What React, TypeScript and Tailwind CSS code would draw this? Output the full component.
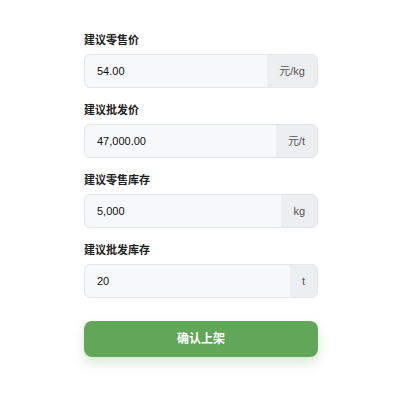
const fields = [
  { label: "建议零售价", value: "54.00", unit: "元/kg" },
  { label: "建议批发价", value: "47,000.00", unit: "元/t" },
  { label: "建议零售库存", value: "5,000", unit: "kg" },
  { label: "建议批发库存", value: "20", unit: "t" },
];

export default function App() {
  return (
    <div
      className="min-h-[400px] bg-white pt-[30px]"
      style={{ fontFamily: '"Liberation Sans", "Noto Sans CJK SC", sans-serif' }}
    >
      <div className="ml-[84px] flex w-[234px] flex-col gap-[12px]">
        {fields.map((f) => (
          <div key={f.label} className="flex flex-col gap-1">
            <label className="text-[11px] leading-5 font-semibold text-[#222]">{f.label}</label>
            <div className="flex h-[34px] overflow-hidden rounded-md border border-[#e3e5e9] bg-[#f7f8fa]">
              <input
                readOnly
                value={f.value}
                className="min-w-0 flex-1 bg-transparent px-3 text-[11px] text-[#111] outline-none"
              />
              <span className="flex items-center bg-[#eceef1] px-3 text-[11px] text-[#555]">{f.unit}</span>
            </div>
          </div>
        ))}
        <button className="mt-[11px] h-[36px] w-full rounded-lg bg-[#62a659] text-[12px] font-bold text-white shadow-[0_6px_12px_rgba(98,166,89,0.25)]">
          确认上架
        </button>
      </div>
    </div>
  );
}
